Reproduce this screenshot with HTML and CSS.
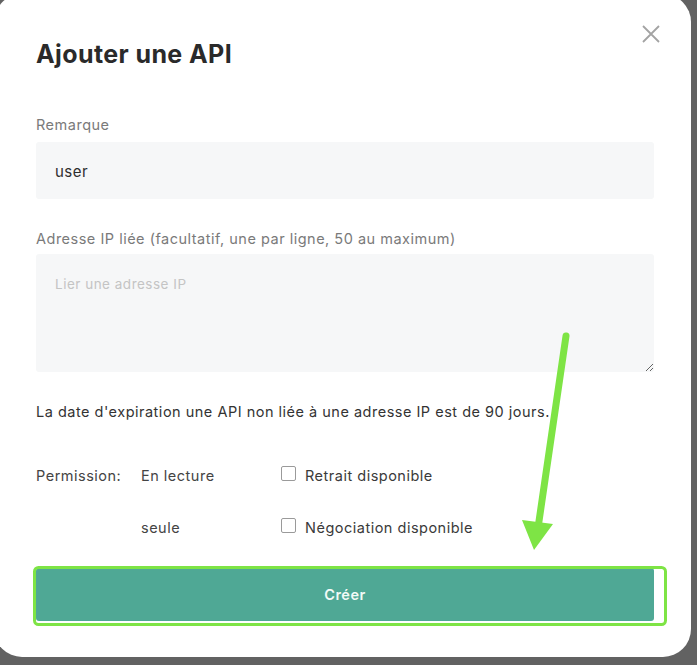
FILE: index.html
```html
<!DOCTYPE html>
<html lang="fr">
<head>
    <meta charset="UTF-8">
    <meta name="viewport" content="width=device-width, initial-scale=1.0">
    <title>Ajouter une API</title>
    <link rel="stylesheet" href="styles.css">
</head>
<body>
    <div class="modal">
        <div class="modal-head">
            <h2 class="modal-title">Ajouter une API</h2>
            <button class="close-btn" type="button" aria-label="Fermer">
                <svg width="18" height="18" viewBox="0 0 18 18">
                    <path d="M1 1 L17 17 M17 1 L1 17" stroke="#a3a3a3" stroke-width="1.8" fill="none"/>
                </svg>
            </button>
        </div>

        <form class="api-form">
            <label class="field-label">Remarque</label>
            <input class="field-input" type="text" value="user">

            <label class="field-label ip-label">Adresse IP liée (facultatif, une par ligne, 50 au maximum)</label>
            <textarea class="field-area" placeholder="Lier une adresse IP"></textarea>

            <p class="note">La date d'expiration une API non liée à une adresse IP est de 90 jours.</p>

            <div class="perm">
                <span class="perm-label">Permission:</span>
                <span class="perm-read">En lecture seule</span>
                <div class="perm-opts">
                    <label class="opt"><span class="box"></span>Retrait disponible</label>
                    <label class="opt"><span class="box"></span>Négociation disponible</label>
                </div>
            </div>

            <button class="submit-btn" type="button">Créer</button>
        </form>
    </div>

    <!-- annotation par-dessus la capture -->
    <svg class="marks" width="697" height="665" viewBox="0 0 697 665">
        <rect x="34.5" y="567.5" width="631" height="57" rx="4" fill="none" stroke="#7ee445" stroke-width="3"/>
        <path d="M566 336 L538 528" stroke="#7ee445" stroke-width="7" stroke-linecap="round" fill="none"/>
        <path d="M522 520 L553 524 L534 550 Z" fill="#7ee445"/>
    </svg>
</body>
</html>
```

FILE: styles.css
```css
body {
    margin: 0;
    padding: 0;
    height: 665px;
    overflow: hidden;
    background-color: #626262;
    font-family: Inter, "Noto Sans", sans-serif;
    color: #333;
    letter-spacing: 0.5px;
    position: relative;
}

.modal {
    margin: -6px 6px 0 -6px;
    height: 663px;
    box-sizing: border-box;
    background-color: #fff;
    border-radius: 28px;
    padding: 44px 37px 0 42px;
}

.modal-head {
    display: flex;
    justify-content: space-between;
    align-items: flex-start;
}

.modal-title {
    margin: 0;
    font-size: 25px;
    line-height: 32px;
    font-weight: 700;
    color: #2a2a2a;
    letter-spacing: 0.4px;
}

.close-btn {
    background: none;
    border: none;
    padding: 0;
    margin: -13px -6px 0 0;
    cursor: pointer;
}

.api-form {
    display: flex;
    flex-direction: column;
    margin-top: 45px;
}

.field-label {
    font-size: 14.5px;
    line-height: 20px;
    color: #7a7a7a;
}

.field-input,
.field-area {
    border: none;
    outline: none;
    background-color: #f6f7f8;
    border-radius: 3px;
    font-family: inherit;
    letter-spacing: 0.5px;
    box-sizing: border-box;
    width: 618px;
}

.field-input {
    height: 57px;
    margin-top: 7px;
    padding: 2px 19px 0;
    font-size: 15px;
    color: #2e2e2e;
}

.ip-label {
    margin-top: 30px;
}

.field-area {
    height: 118px;
    margin-top: 5px;
    padding: 22px 19px;
    font-size: 13.5px;
    resize: vertical;
}

.field-area::placeholder {
    color: #c4c4c4;
}

.note {
    margin: 30px 0 0;
    font-size: 14.5px;
    line-height: 20px;
    color: #333;
}

.perm {
    display: flex;
    margin-top: 28px;
    font-size: 14.5px;
    line-height: 52px;
}

.perm-label {
    width: 105px;
    color: #444;
}

.perm-read {
    width: 100px;
    margin-right: 40px;
    color: #444;
}

.perm-opts {
    display: flex;
    flex-direction: column;
}

.opt {
    display: flex;
    align-items: center;
    gap: 9px;
    color: #3a3a3a;
}

.box {
    width: 15px;
    height: 15px;
    box-sizing: border-box;
    border: 1px solid #9a9a9a;
    border-radius: 2px;
    margin-top: -6px;
}

.submit-btn {
    margin-top: 14px;
    width: 618px;
    height: 53px;
    border: none;
    border-radius: 3px;
    background-color: #4fa895;
    color: #f2faf7;
    font-family: inherit;
    font-size: 14.5px;
    font-weight: 600;
    letter-spacing: 0.5px;
    cursor: pointer;
}

.marks {
    position: absolute;
    left: 0;
    top: 0;
    pointer-events: none;
}
```
